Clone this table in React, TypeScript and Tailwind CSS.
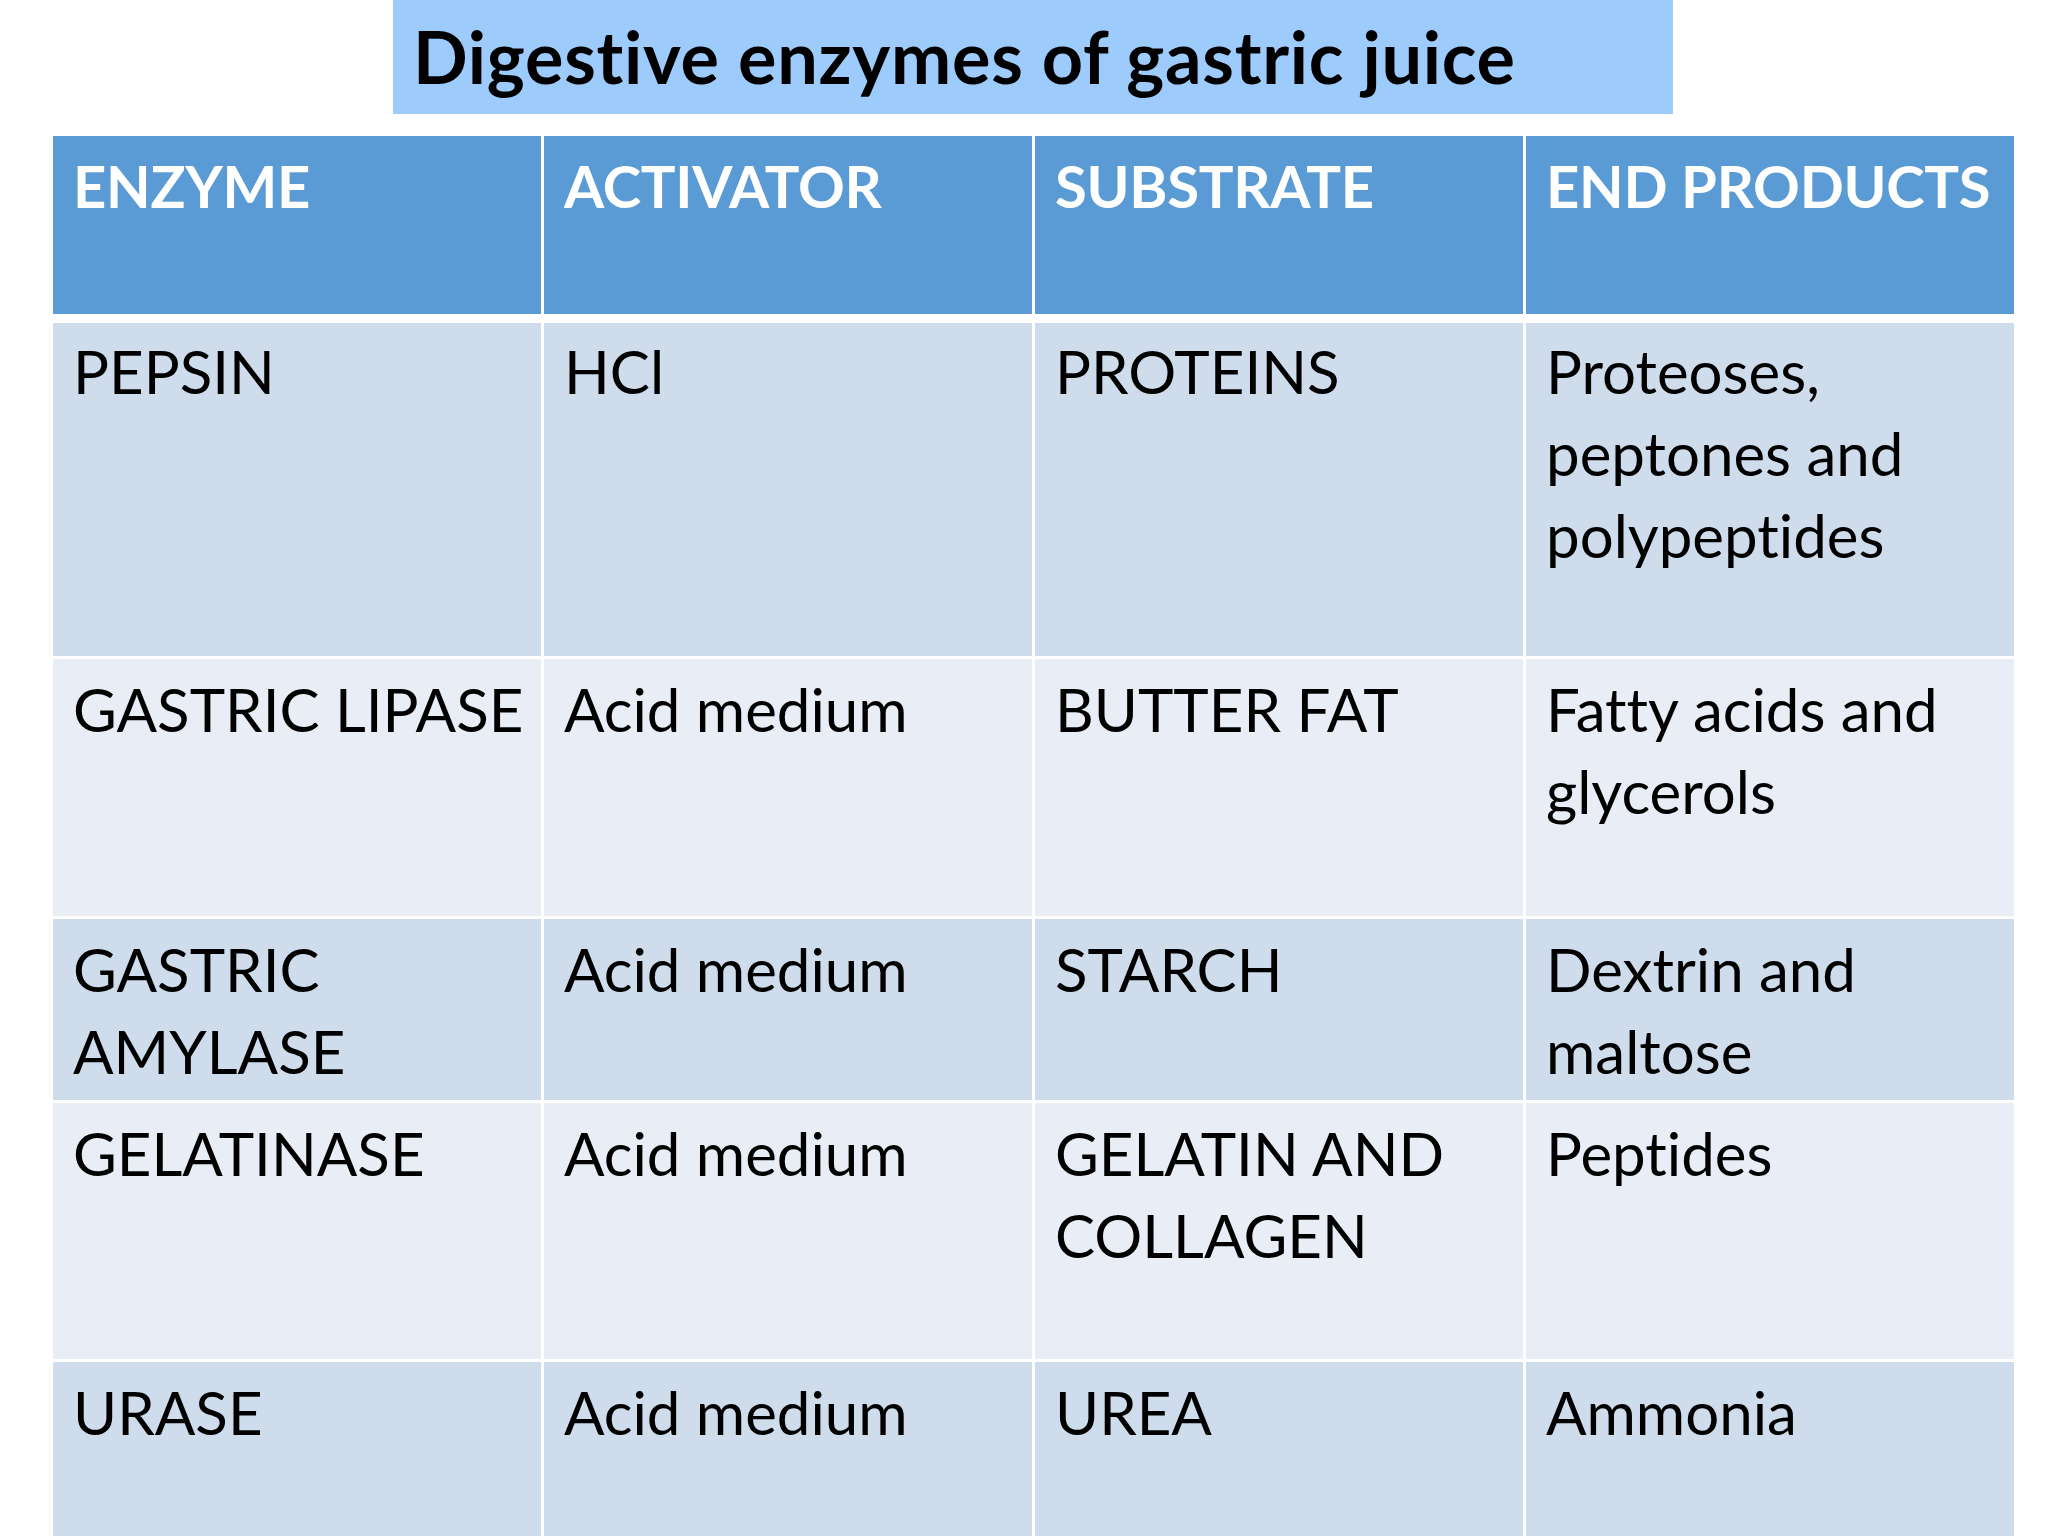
import React from "react";

type Row = { bg: string; h: string; pt: string; cells: string[][] };

const rows: Row[] = [
  {
    bg: "bg-[#cfdcec]",
    h: "h-[333px]",
    pt: "pt-[7px]",
    cells: [["PEPSIN"], ["HCl"], ["PROTEINS"], ["Proteoses,", "peptones and", "polypeptides"]],
  },
  {
    bg: "bg-[#e9edf5]",
    h: "h-[257px]",
    pt: "pt-[9px]",
    cells: [["GASTRIC LIPASE"], ["Acid medium"], ["BUTTER FAT"], ["Fatty acids and", "glycerols"]],
  },
  {
    bg: "bg-[#cfdcec]",
    h: "h-[181px]",
    pt: "pt-[9px]",
    cells: [["GASTRIC", "AMYLASE"], ["Acid medium"], ["STARCH"], ["Dextrin and", "maltose"]],
  },
  {
    bg: "bg-[#e9edf5]",
    h: "h-[256px]",
    pt: "pt-[9px]",
    cells: [["GELATINASE"], ["Acid medium"], ["GELATIN AND", "COLLAGEN"], ["Peptides"]],
  },
  {
    bg: "bg-[#cfdcec]",
    h: "h-[220px]",
    pt: "pt-[9px]",
    cells: [["URASE"], ["Acid medium"], ["UREA"], ["Ammonia"]],
  },
];

const headers = ["ENZYME", "ACTIVATOR", "SUBSTRATE", "END PRODUCTS"];

export default function App() {
  return (
    <div className="w-[2048px] h-[1536px] overflow-hidden bg-white [font-family:Lato,sans-serif] [font-variant-ligatures:none]">
      <div className="ml-[393px] w-[1280px] h-[114px] bg-[#9dcbfc] pl-[20px]">
        <h1 className="text-[72px] font-bold leading-[112px] tracking-[0.01em] text-black whitespace-nowrap">
          Digestive enzymes of gastric juice
        </h1>
      </div>
      <div className="ml-[53px] mt-[22px] w-[1961px] flex flex-col gap-[3px]">
        <div className="grid grid-cols-[488px_488px_488px_488px] gap-x-[3px] h-[178px]">
          {headers.map((h) => (
            <div key={h} className="bg-[#5b9bd5] pl-[20px] pt-[9px]">
              <div className="text-[58px] font-bold leading-[82px] text-white whitespace-nowrap tracking-[-0.005em]">
                {h}
              </div>
            </div>
          ))}
        </div>
        {rows.map((r, i) => (
          <div
            key={i}
            className={`grid grid-cols-[488px_488px_488px_488px] gap-x-[3px] ${r.h} ${i === 0 ? "mt-[6px]" : ""}`}
          >
            {r.cells.map((lines, j) => (
              <div key={j} className={`${r.bg} pl-[20px] ${r.pt}`}>
                {lines.map((l) => (
                  <div key={l} className="text-[60px] leading-[82px] text-black whitespace-nowrap">
                    {l}
                  </div>
                ))}
              </div>
            ))}
          </div>
        ))}
      </div>
    </div>
  );
}
